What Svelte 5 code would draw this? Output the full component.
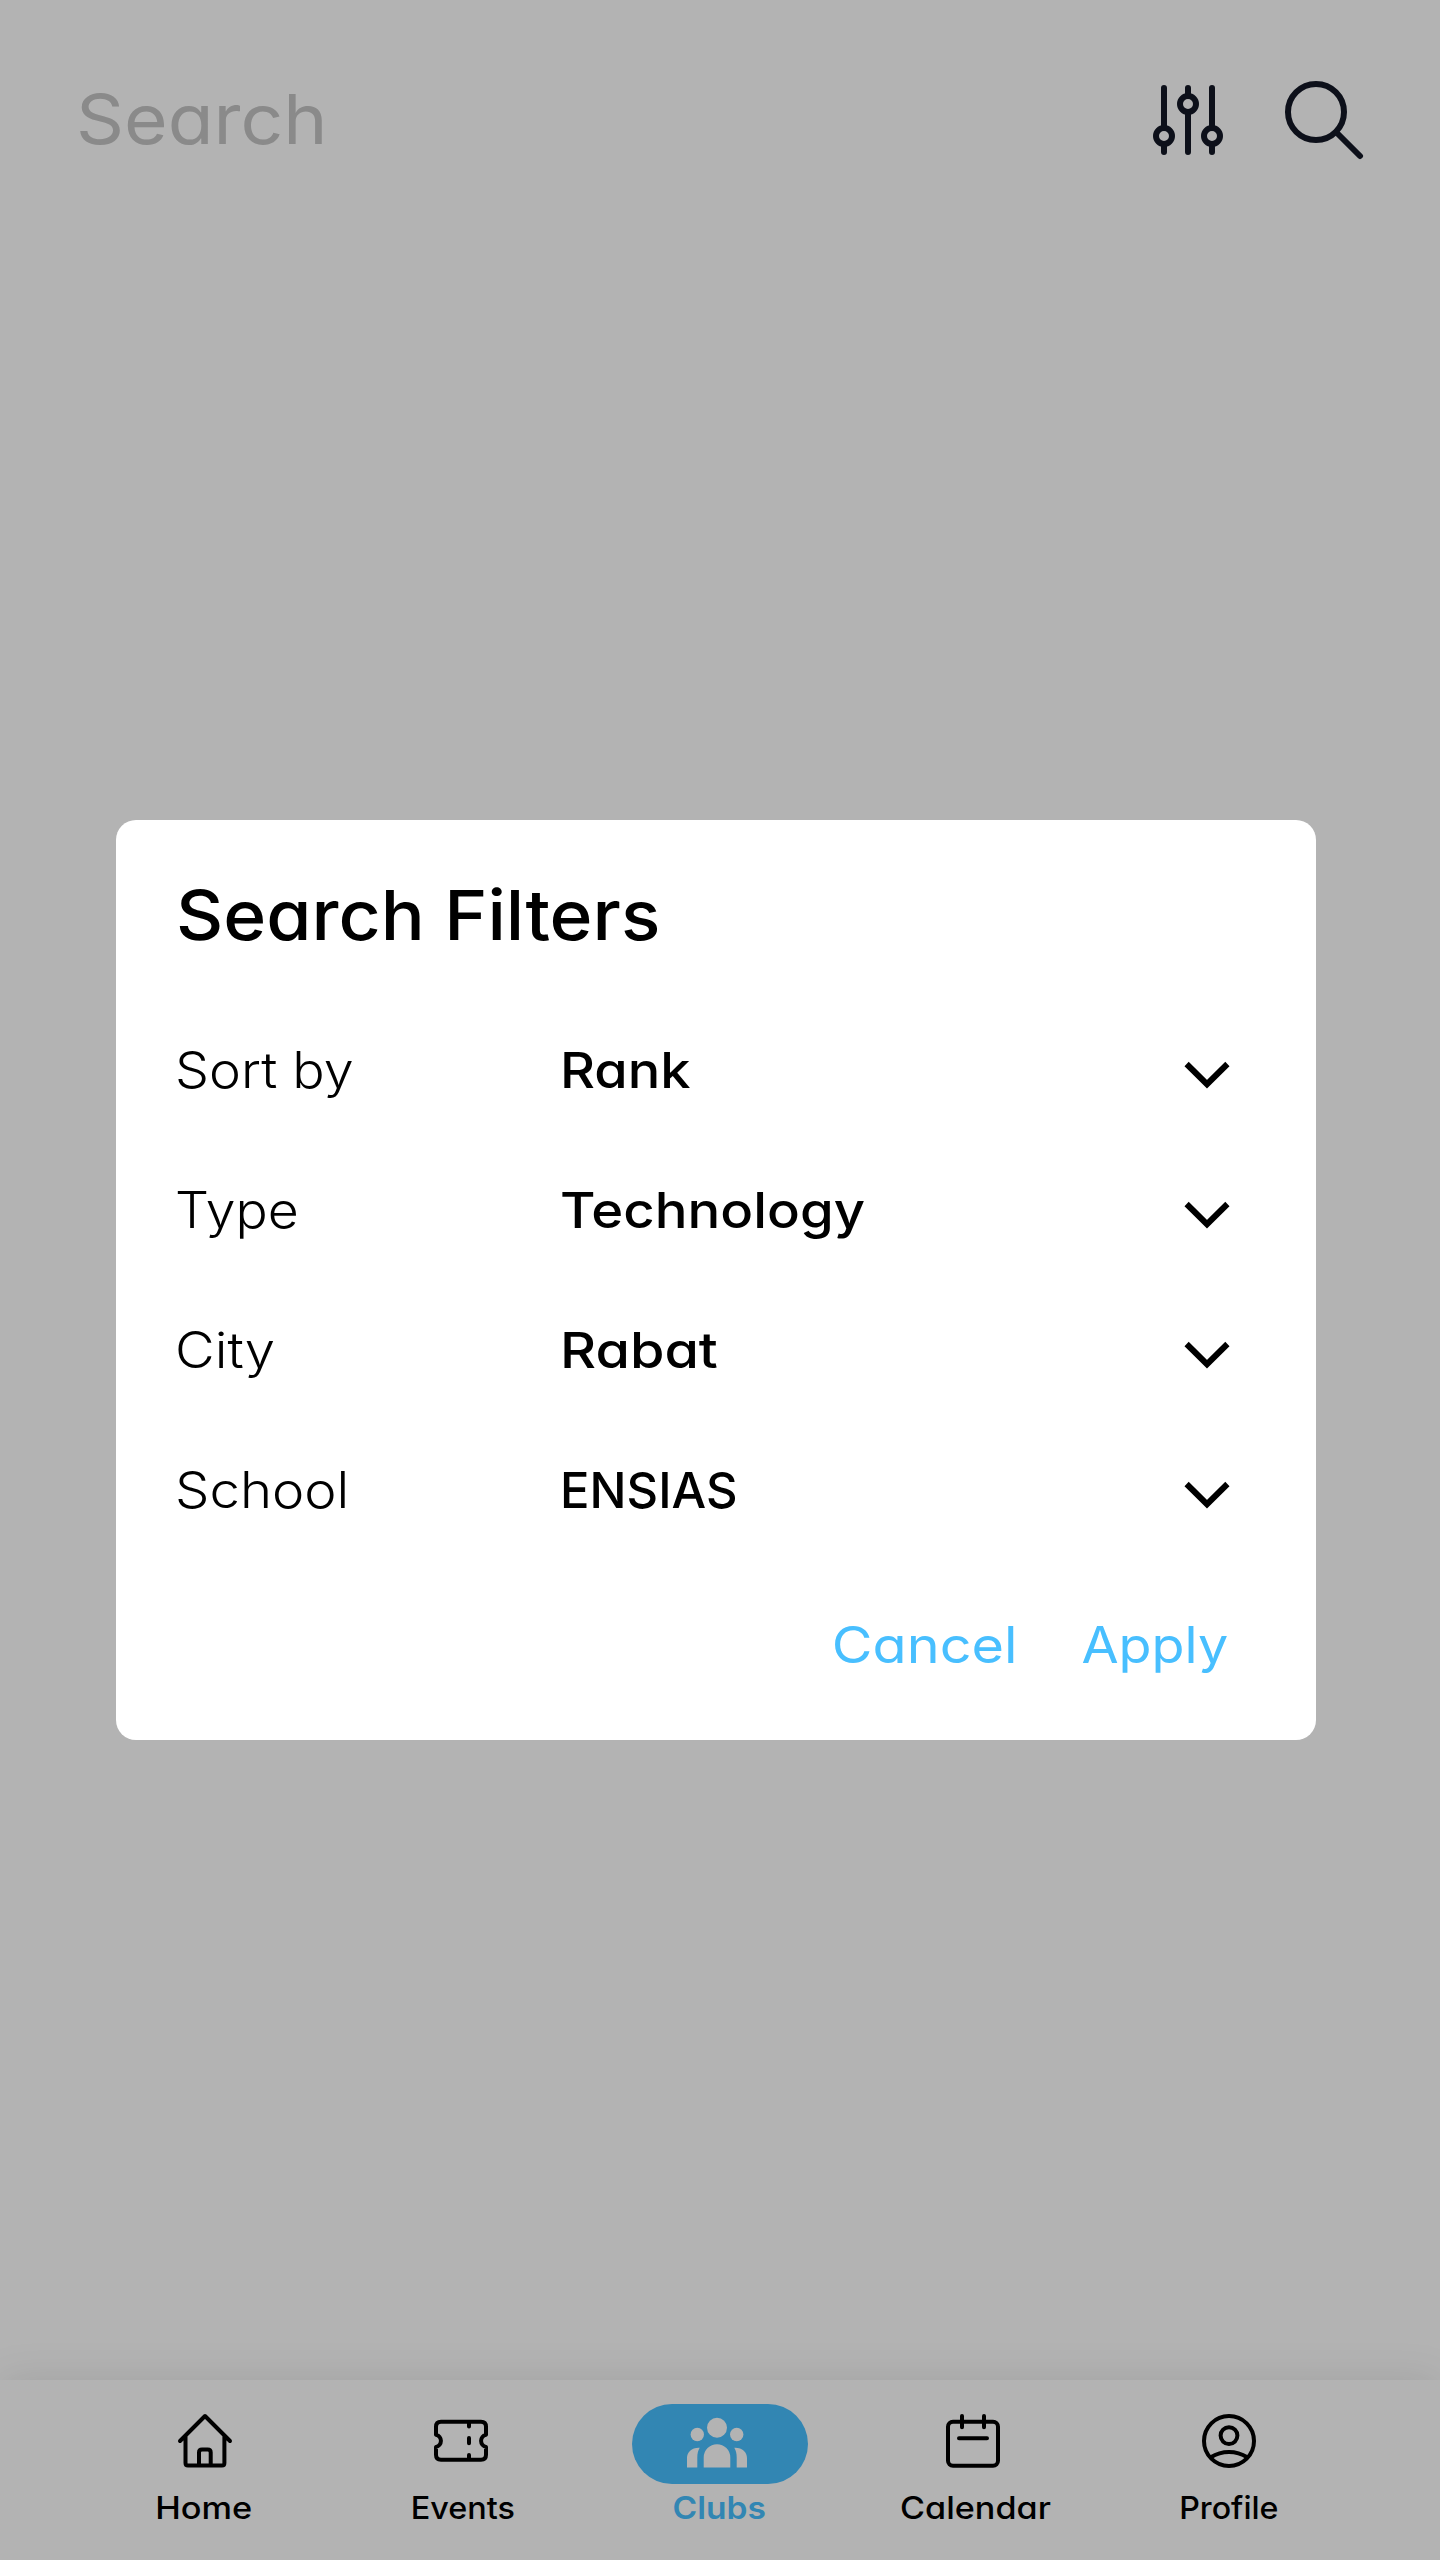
<script>
  const filters = [
    { label: 'Sort by', labelStretch: 1.077, value: 'Rank', valueStretch: 1.082 },
    { label: 'Type', labelStretch: 1.071, value: 'Technology', valueStretch: 1.09 },
    { label: 'City', labelStretch: 1.09, value: 'Rabat', valueStretch: 1.116 },
    { label: 'School', labelStretch: 1.09, value: 'ENSIAS', valueStretch: 0.979 }
  ];
  const tabs = [
    { name: 'Home', stretch: 1.108 },
    { name: 'Events', stretch: 1.045 },
    { name: 'Clubs', stretch: 1.082 },
    { name: 'Calendar', stretch: 1.102 },
    { name: 'Profile', stretch: 1.038 }
  ];
</script>

<div class="screen">
  <header class="topbar">
    <span class="query">Search</span>
    <div class="tools">
      <svg viewBox="0 0 72 76" width="72" height="76">
        <path d="M12 6V46M12 62V70M36 6V14M36 30V70M60 6V46M60 62V70" />
        <circle cx="12" cy="54" r="8" />
        <circle cx="36" cy="22" r="8" />
        <circle cx="60" cy="54" r="8" />
      </svg>
      <svg viewBox="0 0 80 80" width="80" height="80">
        <circle cx="32" cy="32" r="28" />
        <path d="M52.5 52.5L76 76" />
      </svg>
    </div>
  </header>

  <nav class="tabs">
    {#each tabs as tab}
      <div class="tab {tab.name.toLowerCase()}">
        <div class="icon">
          {#if tab.name === 'Home'}
            <svg viewBox="0 0 64 64"><path d="M7 32L32 7L57 32M12.5 27V54Q12.5 56.5 15 56.5H49Q51.4 56.5 51.4 54V27M26 56V43.5Q26 40.5 29 40.5H34.7Q37.7 40.5 37.7 43.5V56" /></svg>
          {:else if tab.name === 'Events'}
            <svg viewBox="0 0 64 64"><path d="M12 12.7H52Q57 12.7 57 17.7V25.7A6.3 6.3 0 0 0 57 38V45.7Q57 50.7 52 50.7H12Q7 50.7 7 45.7V38A6.3 6.3 0 0 0 7 25.7V17.7Q7 12.7 12 12.7ZM40 13V17.5M40 29V34.3M40 46V50" /></svg>
          {:else if tab.name === 'Clubs'}
            <svg class="people" viewBox="0 0 64 64">
              <circle cx="32" cy="18.8" r="10" />
              <circle cx="12.3" cy="25.5" r="6.7" />
              <circle cx="51.7" cy="25.5" r="6.7" />
              <path d="M18.7 58.5V48.5A13.3 13.3 0 0 1 45.3 48.5V58.5ZM2 58.5V49C2 43 7 38.4 14.7 38.8C13 41.5 12.3 45 12.3 48.5V58.5ZM62 58.5V49C62 43 57 38.4 49.3 38.8C51 41.5 51.7 45 51.7 48.5V58.5Z" />
            </svg>
          {:else if tab.name === 'Calendar'}
            <svg viewBox="0 0 64 64"><rect x="7" y="12.7" width="50" height="44" rx="5" /><path d="M21 7V18.3M43 7V18.3M18 29.2H46" /></svg>
          {:else}
            <svg viewBox="0 0 64 64"><circle cx="32" cy="32" r="25" /><circle cx="32" cy="26.6" r="8.4" /><path d="M13.8 48.3C19 45 25 43 32 43S45 45 50.2 48.3" /></svg>
          {/if}
        </div>
        <span class="name" style:transform="scaleX({tab.stretch})">{tab.name}</span>
      </div>
    {/each}
  </nav>

  <div class="scrim">
    <section class="dialog">
      <h1>Search Filters</h1>
      {#each filters as f}
        <div class="row">
          <span class="label" style:transform="scaleX({f.labelStretch})">{f.label}</span>
          <span class="value" style:transform="scaleX({f.valueStretch})">{f.value}</span>
          <svg class="chevron" viewBox="0 0 48 30" width="48" height="30"><path d="M3.6 4L24 24.2L44.4 4" /></svg>
        </div>
      {/each}
      <div class="actions">
        <span class="cancel">Cancel</span>
        <span class="apply">Apply</span>
      </div>
    </section>
  </div>
</div>

<style>
  .screen {
    position: relative;
    width: 1440px;
    height: 2560px;
    display: flex;
    flex-direction: column;
    justify-content: space-between;
    overflow: hidden;
    background: #fff;
    color: #000;
    font-family: Inter, sans-serif;
    /* single-storey "a" */
    font-feature-settings: 'cv11' 1;
  }

  .topbar {
    display: flex;
    justify-content: space-between;
    align-items: center;
    box-sizing: border-box;
    height: 240px;
    padding: 0 76px;
  }
  .query {
    padding-bottom: 3px;
    font-size: 69px;
    color: #c5c5c5;
    transform: scaleX(1.085);
    transform-origin: left;
  }
  .tools {
    display: flex;
    align-items: center;
    gap: 60px;
  }
  .tools svg {
    fill: none;
    stroke: #131826;
    stroke-width: 6;
    stroke-linecap: round;
  }

  .tabs {
    display: grid;
    grid-template-columns: repeat(5, 256px);
    box-sizing: border-box;
    height: 180px;
    padding-left: 77px;
    box-shadow: 0 0 40px rgba(0, 0, 0, 0.1);
  }
  .tab {
    display: flex;
    flex-direction: column;
    align-items: center;
    padding-top: 24px;
  }
  .icon {
    display: flex;
    justify-content: center;
    align-items: center;
    box-sizing: border-box;
    width: 176px;
    height: 80px;
    padding-bottom: 6px;
  }
  .icon svg {
    width: 64px;
    height: 64px;
    fill: none;
    stroke: #000;
    stroke-width: 4;
    stroke-linecap: round;
    stroke-linejoin: round;
  }
  .icon svg.people {
    fill: #fff;
    stroke: none;
  }
  .clubs .icon {
    margin-left: 6px;
    padding-right: 6px;
    border-radius: 40px;
    background: #48bfff;
  }
  .name {
    font-size: 31px;
    font-weight: 500;
    line-height: 48px;
  }
  .home .name {
    margin-right: 3px;
  }
  .events .name,
  .clubs .name,
  .calendar .name {
    margin-left: 4px;
  }
  .clubs .name {
    font-weight: 600;
    color: #48bfff;
  }

  .scrim {
    position: absolute;
    inset: 0;
    display: flex;
    align-items: flex-start;
    background: rgba(0, 0, 0, 0.298);
  }
  .dialog {
    box-sizing: border-box;
    width: 1200px;
    height: 920px;
    margin: 820px 0 0 116px;
    padding: 0 60px;
    border-radius: 20px;
    background: #fff;
  }
  h1 {
    height: 180px;
    margin: 0;
    font-size: 69px;
    font-weight: 500;
    line-height: 190px;
    transform: scaleX(1.061);
    transform-origin: left;
  }
  .row {
    display: grid;
    grid-template-columns: 384px 1fr auto;
    align-items: center;
    justify-items: start;
    height: 140px;
    padding-right: 25px;
    font-size: 50px;
  }
  .label,
  .value {
    transform-origin: left;
  }
  .label {
    margin-left: -1px;
    font-weight: 300;
  }
  .value {
    font-weight: 500;
  }
  .chevron {
    margin-top: 10px;
  }
  .chevron path {
    fill: none;
    stroke: #000;
    stroke-width: 6;
  }
  .actions {
    display: flex;
    justify-content: flex-end;
    gap: 74px;
    padding-right: 28px;
    font-size: 50px;
    line-height: 171px;
    color: #48bfff;
  }
  .cancel,
  .apply {
    transform-origin: right;
  }
  .cancel {
    transform: scaleX(1.115);
  }
  .apply {
    transform: scaleX(1.078);
  }
</style>
